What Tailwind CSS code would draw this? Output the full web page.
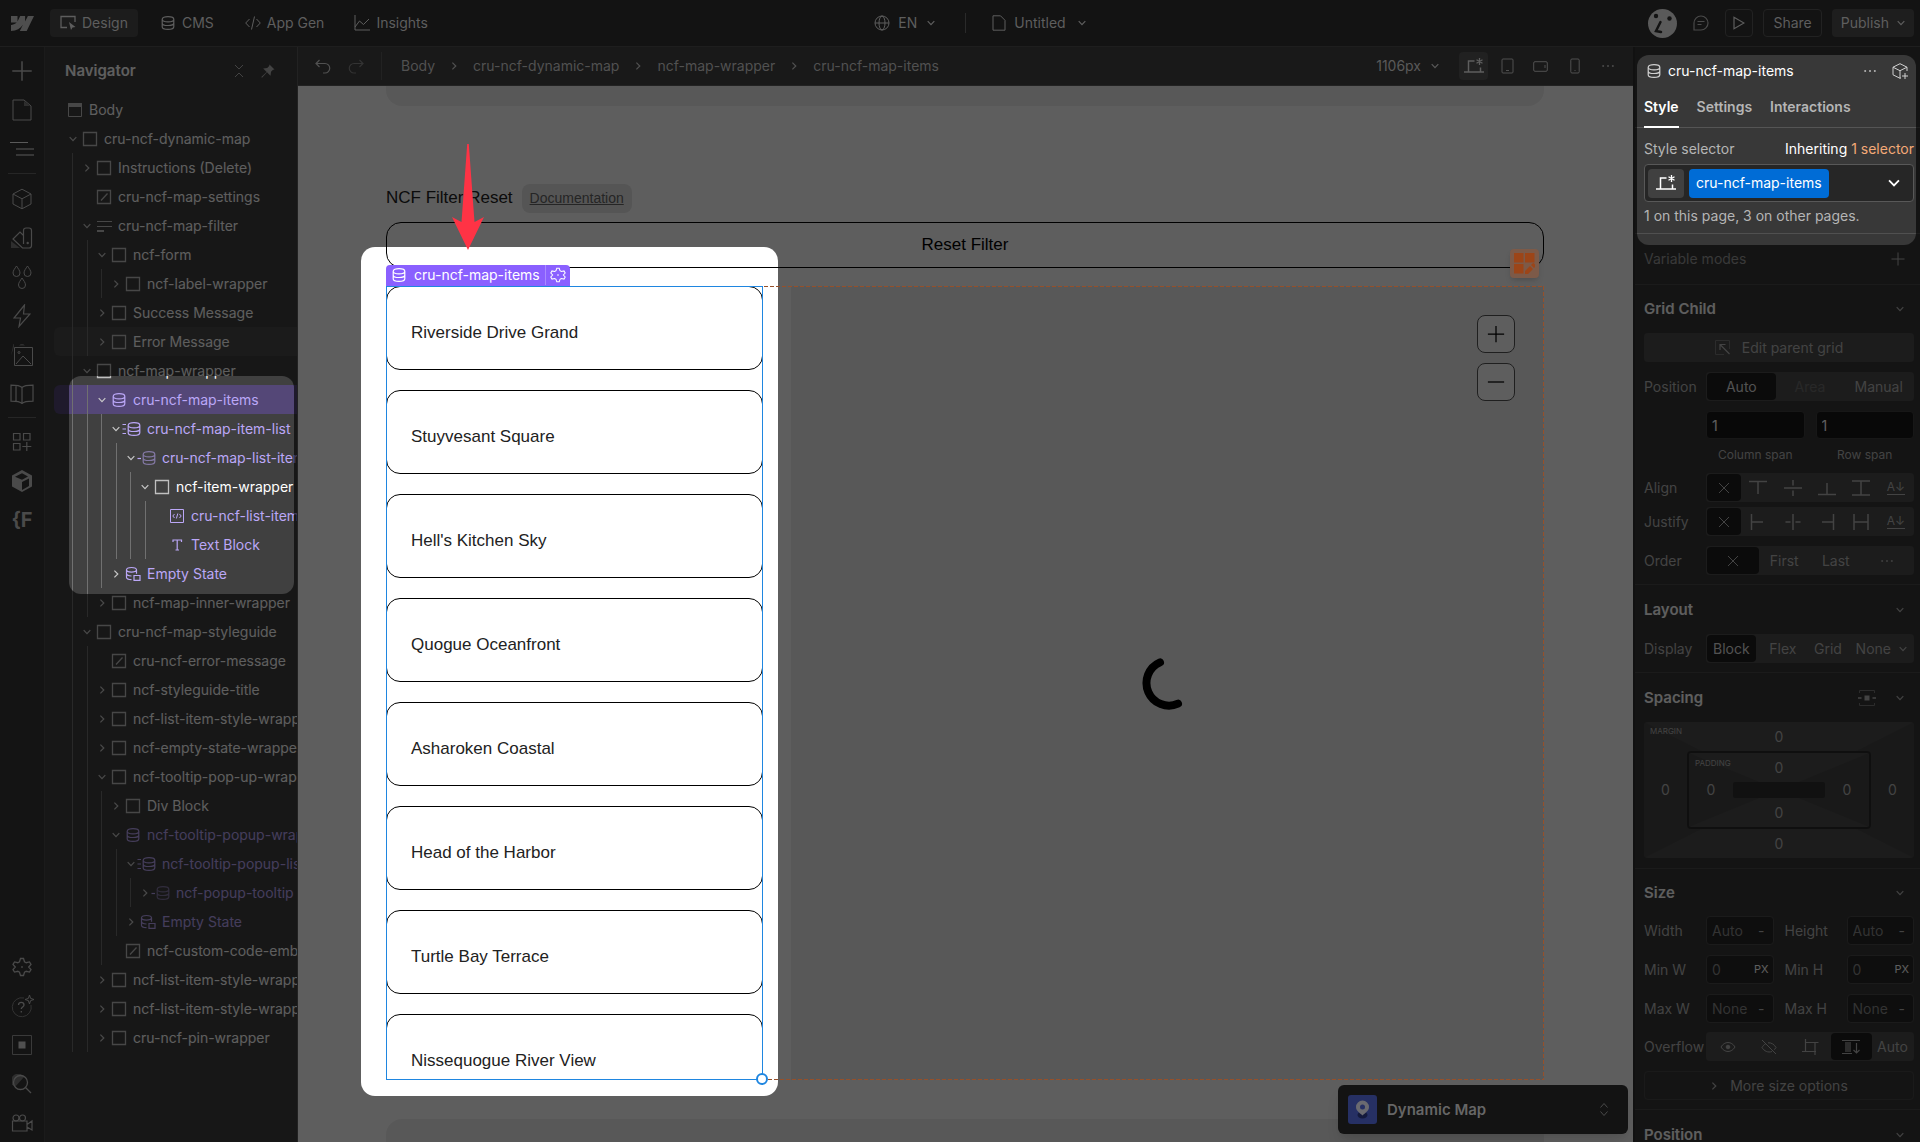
<!DOCTYPE html>
<html lang="en">
<head>
    <meta charset="UTF-8">
    <meta name="viewport" content="width=device-width, initial-scale=1.0">
    <title>Designer - Dynamic Map</title>

    <script src="https://cdn.jsdelivr.net/npm/@tailwindcss/browser@4"></script>

    <script>
        // Navigator tree: [depth, chevron, icon, label, colour]
        const tree = [
            [0, "", "body", "Body", ""],
            [1, "down", "box", "cru-ncf-dynamic-map", ""],
            [2, "right", "box", "Instructions (Delete)", ""],
            [2, "", "slash", "cru-ncf-map-settings", ""],
            [2, "down", "form", "cru-ncf-map-filter", ""],
            [3, "down", "box", "ncf-form", ""],
            [4, "right", "box", "ncf-label-wrapper", ""],
            [3, "right", "box", "Success Message", ""],
            [3, "right", "box", "Error Message", "hover"],
            [2, "down", "box", "ncf-map-wrapper", ""],
            [3, "down", "db", "cru-ncf-map-items", "selected"],
            [4, "down", "dblist", "cru-ncf-map-item-list", "purple"],
            [5, "down", "dbitem", "cru-ncf-map-list-item", "purple"],
            [6, "down", "box", "ncf-item-wrapper", ""],
            [7, "", "embed", "cru-ncf-list-item", "purple"],
            [7, "", "text", "Text Block", "purple"],
            [4, "right", "dbempty", "Empty State", "purple"],
            [3, "right", "box", "ncf-map-inner-wrapper", ""],
            [2, "down", "box", "cru-ncf-map-styleguide", ""],
            [3, "", "slash", "cru-ncf-error-message", ""],
            [3, "right", "box", "ncf-styleguide-title", ""],
            [3, "right", "box", "ncf-list-item-style-wrapper", ""],
            [3, "right", "box", "ncf-empty-state-wrapper", ""],
            [3, "down", "box", "ncf-tooltip-pop-up-wrapper", ""],
            [4, "right", "box", "Div Block", ""],
            [4, "down", "db", "ncf-tooltip-popup-wrapper", "purple"],
            [5, "down", "dblist", "ncf-tooltip-popup-list", "purple"],
            [6, "right", "dbitem", "ncf-popup-tooltip", "purple"],
            [5, "right", "dbempty", "Empty State", "purple"],
            [4, "", "slash", "ncf-custom-code-embed", ""],
            [3, "right", "box", "ncf-list-item-style-wrapper", ""],
            [3, "right", "box", "ncf-list-item-style-wrapper", ""],
            [3, "right", "box", "cru-ncf-pin-wrapper", ""]
        ];
        const step = 14.5;

        document.addEventListener("DOMContentLoaded", function() {
            let html = "";
            for (const [depth, chevron, icon, label, state] of tree) {
                const purple = state === "purple" || state === "selected";
                const bg = state === "selected" ? "bg-[#544777]" : state === "hover" ? "bg-[#494949]" : "";
                let guides = "";
                for (let i = 0; i < depth - 1; i++) {
                    guides += `<span class="absolute inset-y-0 w-px bg-[#707070]" style="left:${Math.round(18 + i * step)}px"></span>`;
                }
                html += `<li class="relative h-[29px] rounded-l-md ${bg}">${guides}
                    <button class="flex h-full items-center whitespace-nowrap ${purple ? "text-[#bba7f7]" : "text-white"}" style="padding-left:${Math.round(depth * step)}px">
                        <svg class="mr-[6px] size-2 ${chevron ? "" : "invisible"} text-[#c8c8c8]"><use href="#${chevron || "down"}"/></svg>
                        <svg class="-ml-[5px] mr-[6px] h-4 w-5 ${purple ? "" : "text-[#c0c0c0]"}"><use href="#n-${icon}"/></svg>
                        <span>${label}</span>
                    </button>
                </li>`;
            }
            document.getElementById("tree").innerHTML = html;
        })
    </script>
</head>
<body class="flex h-screen flex-col overflow-hidden bg-[#131313] fill-none stroke-current font-['Inter',sans-serif] text-sm text-[#5e5e5e]">

    <!-- Shared icons, they take fill and stroke from body -->
    <svg width="0" height="0" class="absolute">
        <symbol id="down" viewBox="0 0 8 8"><path d="M.7 2.2 4 5.6l3.300-3.400" stroke-width="1.200"/></symbol>
        <symbol id="right" viewBox="0 0 8 8"><path d="M2.400.6 5.800 4 2.400 7.400" stroke-width="1.200"/></symbol>
        <symbol id="db" viewBox="0 0 16 16"><path d="M2.200 4.200c0-1.600 2.600-2.600 5.800-2.600s5.800 1 5.800 2.600-2.600 2.600-5.800 2.600-5.800-1-5.800-2.600Zm0 0v7.600c0 1.600 2.600 2.600 5.800 2.600s5.800-1 5.800-2.600V4.200M2.200 7.900c0 1.500 2.600 2.600 5.800 2.600s5.800-1.100 5.800-2.600" stroke-width="1.200"/></symbol>
        <symbol id="n-body" viewBox="-4 0 20 16"><path d="M1.500 1.500h13v13h-13z"/><path d="M1.500 1.500h13v3h-13z" fill="currentColor"/></symbol>
        <symbol id="n-box" viewBox="-4 0 20 16"><path d="M1.500 1.500h13v13h-13z" stroke-width="1.300"/></symbol>
        <symbol id="n-slash" viewBox="-4 0 20 16"><path d="M1.500 1.500h13v13h-13zM5 11.500l6.500-7" stroke-width="1.300"/></symbol>
        <symbol id="n-form" viewBox="-4 0 20 16"><path d="M1 3.500h15M1 8.500h15"/><path d="M1 13h7" stroke-width="2"/></symbol>
        <symbol id="n-db" viewBox="-4 0 20 16"><use href="#db" width="16" height="16"/></symbol>
        <symbol id="n-dblist" viewBox="-4 0 20 16"><path d="M-2.500 3.500H1M-2.500 8H1M-2.500 12.500H1" stroke-width="1.200"/><use href="#db" x="1" width="16" height="16"/></symbol>
        <symbol id="n-dbitem" viewBox="-4 0 20 16"><path d="M-2.500 8.500H1" stroke-width="1.200"/><use href="#db" x="1" width="16" height="16" opacity=".55"/></symbol>
        <symbol id="n-dbempty" viewBox="-4 0 20 16"><path d="M1.500 3.800c0-1.400 2.300-2.300 5-2.300s5 .9 5 2.300-2.300 2.300-5 2.300-5-.9-5-2.300Zm0 0v7.500c0 1.400 2 2.300 5 2.400M1.500 7.600c0 1.400 2 2.300 5 2.400M11.500 3.800v4M9 9.500h6v4.800H9z" stroke-width="1.200"/></symbol>
        <symbol id="n-embed" viewBox="-4 0 20 16"><path d="M1.500 1.500h13v13h-13zM5.500 6 3.800 8l1.700 2M10.500 6l1.700 2-1.700 2M8.800 5.500l-1.400 5"/></symbol>
        <symbol id="n-text" viewBox="-4 0 20 16"><path d="M4 5V3h8.500v2M8.200 3v10M6.500 13h3.500" stroke-width="1.200"/></symbol>
        <symbol id="plus" viewBox="0 0 16 16"><path d="M8 1.500v13M1.500 8h13"/></symbol>
        <symbol id="x" viewBox="0 0 16 16"><path d="m3 3 10 10M13 3 3 13"/></symbol>
        <symbol id="dots" viewBox="0 0 16 16"><path d="M1.500 8h2M7 8h2M12.500 8h2" stroke-width="1.800"/></symbol>
        <symbol id="desktop" viewBox="0 0 20 16"><path d="M4.500 13.500V3h6M0 14h20M16.500 9.500V14" stroke-width="1.500"/><path d="M15.500 0v7M12.500 1.700l6 3.600M18.500 1.700l-6 3.600" stroke-width="1.300"/></symbol>
        <symbol id="file" viewBox="0 0 14 16"><path d="M1 .8h7.500L13 5.300v9.900H1z"/></symbol>
        <symbol id="cube" viewBox="0 0 22 22"><path d="M11 1.200 20 6v10l-9 4.800L2 16V6zM2 6l9 4.800L20 6M11 10.800v10"/></symbol>
        <symbol id="gear" viewBox="0 0 20 20"><path d="M8.500 1.500h3l1 3.200 1.700 1 3.300-.8 1.500 2.600-2.300 2.500 2.300 2.500-1.500 2.600-3.300-.8-1.700 1-1 3.200h-3l-1-3.200-1.700-1-3.300.8L1 12.500 3.300 10 1 7.500l1.500-2.600 3.300.8 1.700-1z" stroke-width="1.300"/><path d="M9.200 9.200h1.600v1.600H9.200z" fill="currentColor" stroke="none"/></symbol>
        <symbol id="a-top" viewBox="0 0 18 16"><path d="M0 1.500h18M9 2v12" stroke-width="1.500"/></symbol>
        <symbol id="a-mid" viewBox="0 0 18 16"><path d="M0 8h18M9 0v5.500M9 10.500V16" stroke-width="1.500"/></symbol>
        <symbol id="a-bottom" viewBox="0 0 18 16"><path d="M0 14.500h18M9 14V3" stroke-width="1.500"/></symbol>
        <symbol id="a-stretch" viewBox="0 0 18 16"><path d="M0 1h18M0 15h18M9 1v14" stroke-width="1.500"/></symbol>
        <symbol id="j-left" viewBox="0 0 18 16"><path d="M2.500-1v18M3 8h11" stroke-width="1.500"/></symbol>
        <symbol id="j-mid" viewBox="0 0 18 16"><path d="M9-1v18M1.500 8h5M11.500 8h5" stroke-width="1.500"/></symbol>
        <symbol id="j-right" viewBox="0 0 18 16"><path d="M15.500-1v18M4 8h11" stroke-width="1.500"/></symbol>
        <symbol id="j-stretch" viewBox="0 0 18 16"><path d="M2-1v18M16-1v18M2 8h14" stroke-width="1.500"/></symbol>
    </svg>

    <!-- Top bar -->
    <header class="grid h-[47px] shrink-0 grid-cols-[1fr_auto_1fr] items-center border-b border-[#1e1e1e] bg-[#131313]">
        <nav class="flex items-center gap-3 pl-[11px]">
            <svg class="mr-1 h-[15px] w-[23px]" viewBox="0 0 23 15" fill="#4e4e4e" stroke="none"><path d="M23 0 15.700 15H8.800l3.100-6.200C9.400 12.500 5.600 14.700 0 15V9.100s3.600-.2 5.700-2.500H0V0h6.500v5.500L9.200 0h4.900v5.400L16.900 0z"/></svg>
            <button class="flex h-7 items-center gap-[6px] rounded bg-[#1c1c1c] px-[10px]">
                <svg class="size-4" viewBox="0 0 16 16" stroke-width="1.300"><path d="M15 7V1.500H1v11h6"/><path d="m9 7 6.500 5-3 .4L11 15z" fill="currentColor" stroke="none"/></svg>
                Design
            </button>
            <button class="flex h-7 items-center gap-[6px] px-[10px]"><svg class="size-4"><use href="#db"/></svg>CMS</button>
            <button class="flex h-7 items-center gap-[6px] px-[9px]">
                <svg class="h-4 w-4" viewBox="0 0 16 16"><path d="M4.500 4 .700 8l3.800 4M11.500 4l3.800 4-3.800 4M9.500 1.500l-3 13"/></svg>
                App Gen
            </button>
            <button class="flex h-7 items-center gap-[6px] px-[9px]">
                <svg class="size-4" viewBox="0 0 16 16"><path d="M1 0v15h15M1 12l4.500-6 4 3.500L15 4"/></svg>
                Insights
            </button>
        </nav>
        <div class="flex items-center pl-10">
            <button class="flex items-center gap-2">
                <svg class="size-4" viewBox="0 0 16 16"><circle cx="8" cy="8" r="7"/><ellipse cx="8" cy="8" rx="3" ry="7"/><path d="M1 8h14"/></svg>
                EN <svg class="ml-[2px] size-2"><use href="#down"/></svg>
            </button>
            <span class="ml-[30px] mr-[26px] h-5 w-px bg-[#2a2a2a]"></span>
            <button class="flex items-center gap-2">
                <svg class="h-4 w-[14px]"><use href="#file"/></svg>
                Untitled <svg class="ml-1 size-2"><use href="#down"/></svg>
            </button>
        </div>
        <div class="flex items-center justify-end gap-[10px] pr-[6px]">
            <svg class="size-[29px]" viewBox="0 0 29 29" stroke="none"><circle cx="14.500" cy="14.500" r="14.500" fill="#5a5a5a"/><circle cx="8" cy="7" r="2.200" fill="#131313"/><circle cx="21.500" cy="9.500" r="2.200" fill="#131313"/><path d="M12.500 13 8 22l5 1" stroke="#131313" stroke-width="2.500" stroke-linecap="round"/></svg>
            <button class="mx-[6px] text-[#4a4a4a]" aria-label="Comments">
                <svg class="size-4" viewBox="0 0 16 16" stroke-width="1.200"><path d="M1 15V8a7 7 0 1 1 7 7zM4.500 6.500h7M4.500 9.500h4"/></svg>
            </button>
            <button class="grid size-7 place-items-center rounded border border-[#222]" aria-label="Preview">
                <svg class="h-[14px] w-3" viewBox="0 0 12 14" stroke-width="1.200"><path d="M1 1.200v11.600L11 7z"/></svg>
            </button>
            <button class="h-7 rounded border border-[#222] px-[9px]">Share</button>
            <button class="flex h-7 items-center gap-2 rounded bg-[#1e1e1e] px-[9px]">Publish <svg class="size-2"><use href="#down"/></svg></button>
        </div>
    </header>

    <div class="flex min-h-0 flex-1">

        <!-- Icon rail -->
        <aside class="flex w-[45px] shrink-0 flex-col items-center border-r border-[#1b1b1b] bg-[#141414] pt-1 text-[#4a4a4a] [&_button]:grid [&_button]:h-[39px] [&_button]:w-full [&_button]:shrink-0 [&_button]:place-items-center">
            <button aria-label="Add"><svg class="size-6"><use href="#plus"/></svg></button>
            <button aria-label="Pages">
                <svg class="h-[22px] w-5" viewBox="0 0 20 22"><path d="M1 1h11l7 6v14H1z"/><path d="M12 2v5h6z" fill="#2e2e2e" stroke="none"/></svg>
            </button>
            <button aria-label="Navigator" class="text-[#5a5a5a]">
                <svg class="h-4 w-6" viewBox="0 0 24 16" stroke-width="1.200"><path d="M0 1.500h18M6 8h18M6 14h18"/></svg>
            </button>
            <span class="my-[5px] h-px w-7 shrink-0 bg-[#262626]"></span>
            <button aria-label="Components"><svg class="size-[22px]"><use href="#cube"/></svg></button>
            <button aria-label="Variables">
                <svg class="size-[22px]" viewBox="0 0 22 22" stroke-width="1.200"><path d="M0 14v7h9z" fill="#2e2e2e" stroke="none"/><path d="M12.500 3.500C12.500 2 13.500 1 15 1h3c1.500 0 2.500 1 2.500 2.500v15c0 1.500-1 2.500-2.500 2.500h-6.500L2 12l7-7 3.500 3.500zM12.500 8v9"/><circle cx="16.700" cy="16" r=".6"/></svg>
            </button>
            <button aria-label="Style guide">
                <svg class="h-6 w-5" viewBox="0 0 20 24"><path id="drop" d="M4.500 1C3 3.500 1 5.500 1 8a3.500 3.500 0 0 0 7 0c0-2.500-2-4.500-3.500-7z"/><use href="#drop" x="11"/><use href="#drop" x="5.500" y="12"/></svg>
            </button>
            <button aria-label="Interactions">
                <svg class="h-6 w-[18px]" viewBox="0 0 18 24" stroke-width="1.200"><path d="M11.500 1 1 14h6.500L6 22.500 17 10h-6.500z"/></svg>
            </button>
            <button aria-label="Assets">
                <svg class="size-[22px]" viewBox="0 0 22 22"><path d="M3.500 3.500h18v18h-18zM5 20l7-8 8 8"/><circle cx="8" cy="8.500" r="1"/><path d="M0 11.500 3-3v6zM11-1l3 2.500H8z" fill="#2e2e2e" stroke="none"/></svg>
            </button>
            <button aria-label="CMS">
                <svg class="h-5 w-6" viewBox="0 0 24 20" stroke-width="1.200"><path d="M12 3.500C10.500 2 8 1.200 1 1.200v16C8 17.200 10.500 18 12 19.500c1.500-1.500 4-2.300 11-2.300v-16c-7 0-9.500.8-11 2.300v16M6 1.500v15.800"/></svg>
            </button>
            <span class="my-1 h-px w-7 shrink-0 bg-[#262626]"></span>
            <button aria-label="Apps">
                <svg class="size-5" viewBox="0 0 20 20" stroke-width="1.200"><path d="M1.500 1.500h6.500v6.500h-6.500zM11.500 1.500H18v6.500h-6.500zM1.500 11.500h6.500V18h-6.500zM14.800 10v9M10.300 14.500h9"/></svg>
            </button>
            <button aria-label="Library app">
                <svg class="size-6" viewBox="0 0 24 24" stroke="none"><path d="m12 1 10 5.500v11L12 23 2 17.500v-11z" fill="#4a4a4a"/><path d="M5 7.700 12 4.200l6 3.200-6 3.400zM12 13v8l7-4V9.500z" fill="#141414"/></svg>
            </button>
            <button aria-label="Finsweet" class="text-xl font-bold">{F</button>
            <span class="flex-1"></span>
            <button aria-label="Settings"><svg class="size-5"><use href="#gear"/></svg></button>
            <button aria-label="Help">
                <svg class="h-6 w-6" viewBox="0 0 24 24"><path d="M14 4a9.500 9.500 0 1 0 7 7" stroke="#333"/><path d="M8.500 11c0-3.500 5.500-3.500 5.500 0 0 2-2.700 2-2.700 4M11.300 17v1.500" stroke-width="1.300"/><path d="M19.500 1l1.100 3.400L24 5.500l-3.400 1.100-1.100 3.400-1.100-3.400L15 5.500l3.400-1.100z"/></svg>
            </button>
            <button aria-label="Audit">
                <svg class="size-5" viewBox="0 0 20 20" stroke="#3a3a3a"><path d="M.5.500h19v19H.5z"/><path d="M6.500 6.500h7v7h-7z" fill="#505050" stroke="none"/></svg>
            </button>
            <button aria-label="Search">
                <svg class="size-5" viewBox="0 0 20 20" stroke-width="1.300"><path d="M3 13 12 3a7 7 0 1 0-9 10z" fill="#2e2e2e" stroke="none"/><circle cx="8.500" cy="8.500" r="7"/><path d="m13.500 13.500 5.500 5.500"/></svg>
            </button>
            <button aria-label="Video tutorials">
                <svg class="h-[18px] w-[22px]" viewBox="0 0 22 18" stroke-width="1.200"><circle cx="5" cy="4" r="3"/><circle cx="11.500" cy="4" r="3"/><path d="M1.500 7v10H16V7zM16 10.500l5-3.500v9l-5-3"/></svg>
            </button>
        </aside>

        <!-- Navigator -->
        <section class="relative w-[253px] shrink-0 overflow-hidden border-r border-[#222] bg-[#404040]">
            <div class="flex h-12 items-center pl-[20px] pr-[22px] text-white">
                <h2 class="flex-1 text-[15px] font-semibold">Navigator</h2>
                <svg class="mr-[18px] h-[14px] w-2 text-[#b5b5b5]" viewBox="0 0 8 14"><path d="m0 1 4 4 4-4M0 13l4-4 4 4"/></svg>
                <svg class="size-[14px]" viewBox="0 0 14 14" fill="#b5b5b5" stroke="none"><path d="m8.500.5 5 5-1.500.3-2 2-.5 4L6 8.300 1 13.700l-.7-.7L5.700 8 2.200 4.500l4-.5 2-2z"/></svg>
            </div>
            <ul id="tree" class="ml-[9px]"><!-- Filled in by JS --></ul>
            <!-- Spotlight -->
            <div class="pointer-events-none absolute left-6 top-[329px] h-[218px] w-[225px] rounded-xl shadow-[0_0_0_2000px_rgba(0,0,0,0.63)]"></div>
        </section>

        <main class="flex min-w-0 flex-1 flex-col">

            <!-- Breadcrumb bar -->
            <div class="flex h-[39px] shrink-0 items-center border-b border-[#222] bg-[#191919] pl-[17px] pr-[18px] text-[#515151]">
                <button aria-label="Undo"><svg class="h-[15px] w-4" viewBox="0 0 16 15" stroke-width="1.200"><path d="M4.500 1 1 4.500 4.500 8M1 4.500h9a4.700 4.700 0 0 1 0 9.500H8"/></svg></button>
                <button class="ml-[17px] text-[#333]" aria-label="Redo"><svg class="h-[15px] w-4" viewBox="0 0 16 15" stroke-width="1.200"><path d="M11.500 1 15 4.500 11.500 8M15 4.500H6A4.700 4.700 0 0 0 6 14h2"/></svg></button>
                <span class="ml-[17px] mr-[19px] h-7 w-px bg-[#222]"></span>
                <nav class="flex flex-1 items-center gap-[15px] whitespace-nowrap">
                    <a href="#">Body</a>
                    <svg class="size-2"><use href="#right"/></svg>
                    <a href="#">cru-ncf-dynamic-map</a>
                    <svg class="size-2"><use href="#right"/></svg>
                    <a href="#">ncf-map-wrapper</a>
                    <svg class="size-2"><use href="#right"/></svg>
                    <a href="#">cru-ncf-map-items</a>
                </nav>
                <button class="flex items-center gap-[10px] text-[#5a5a5a]">1106px <svg class="size-2"><use href="#down"/></svg></button>
                <button class="ml-5 grid h-7 w-[29px] place-items-center rounded bg-[#212121] text-[#5e5e5e]" aria-label="Desktop"><svg class="h-4 w-5"><use href="#desktop"/></svg></button>
                <button class="ml-[13px]" aria-label="Tablet"><svg class="h-4 w-[13px]" viewBox="0 0 13 16"><path d="M2 1h9q1 0 1 1v12q0 1-1 1H2q-1 0-1-1V2q0-1 1-1zM5 12.500h3"/></svg></button>
                <button class="ml-[19px]" aria-label="Mobile landscape"><svg class="h-[11px] w-[15px]" viewBox="0 0 15 11"><path d="M2 .7h11q1.300 0 1.300 1.300v7q0 1.300-1.300 1.300H2Q.700 10.300.700 9V2Q.700.700 2 .700zM12 4v3"/></svg></button>
                <button class="ml-[22px]" aria-label="Mobile"><svg class="h-4 w-[10px]" viewBox="0 0 10 16"><path d="M2 1h6q1.200 0 1.200 1.200v11.600Q9.200 15 8 15H2Q.800 15 .800 13.800V2.200Q.800 1 2 1zM4.500 12.500h1"/></svg></button>
                <button class="ml-[21px]" aria-label="More"><svg class="size-[14px]"><use href="#dots"/></svg></button>
            </div>

            <!-- Canvas -->
            <div class="relative flex min-h-0 flex-1 flex-col overflow-hidden bg-white pl-[88px] pr-[89px] font-['Liberation_Sans',sans-serif] text-[17px] text-[#222]">
                <div class="h-5 shrink-0 rounded-b-2xl bg-[#efefef]"></div>
                <div class="mt-[78px] flex h-[29px] shrink-0 items-center gap-[9px]">
                    <h3>NCF Filter Reset</h3>
                    <a href="#" class="rounded-lg bg-[#e6e6e6] px-2 text-sm/[29px] text-[#666] underline">Documentation</a>
                </div>
                <button class="mt-[9px] h-[46px] shrink-0 rounded-[15px] border border-black text-black">Reset Filter</button>

                <div class="relative mt-[18px] grid h-[794px] shrink-0 grid-cols-[377px_1fr] gap-7">
                    <ul class="flex flex-col gap-5 overflow-hidden leading-6 [&_li]:shrink-0 [&_li]:rounded-[14px] [&_li]:border [&_li]:border-black [&_li]:pb-6 [&_li]:pl-6 [&_li]:pt-[34px]">
                        <li>Riverside Drive Grand</li>
                        <li>Stuyvesant Square</li>
                        <li>Hell's Kitchen Sky</li>
                        <li>Quogue Oceanfront</li>
                        <li>Asharoken Coastal</li>
                        <li>Head of the Harbor</li>
                        <li>Turtle Bay Terrace</li>
                        <li>Nissequogue River View</li>
                    </ul>
                    <div class="relative grid place-items-center bg-[#efefef] text-black">
                        <svg class="size-[52px] overflow-visible" viewBox="1 -1 52 52" stroke-width="8" stroke-linecap="round"><path d="M19 4.400A22.500 22.500 0 1 0 37 45.700"/></svg>
                        <div class="absolute right-[29px] top-[29px] flex flex-col gap-[10px]">
                            <button class="grid size-[38px] place-items-center rounded-lg border border-[#555] bg-white" aria-label="Zoom in"><svg class="size-5"><use href="#plus"/></svg></button>
                            <button class="grid size-[38px] place-items-center rounded-lg border border-[#555] bg-white" aria-label="Zoom out"><svg class="size-5" viewBox="0 0 16 16"><path d="M1.500 8h13"/></svg></button>
                        </div>
                    </div>
                </div>
                <div class="mt-[39px] flex-1 rounded-t-2xl bg-[#efefef]"></div>

                <!-- Spotlight -->
                <div class="pointer-events-none absolute left-[63px] top-[161px] h-[849px] w-[417px] rounded-[14px] shadow-[0_0_0_2000px_rgba(0,0,0,0.63)]"></div>

                <!-- Grid outline and its edit badge -->
                <div class="pointer-events-none absolute left-[88px] right-[89px] top-[200px] h-[794px]">
                    <svg class="size-full"><rect width="100%" height="100%" stroke="#96502a" stroke-width="2" stroke-dasharray="4 2"/></svg>
                </div>
                <button class="absolute right-[94px] top-[163px] grid size-[29px] place-items-center rounded bg-[#7d5a48] shadow-md" aria-label="Edit grid">
                    <svg class="size-[21px]" viewBox="0 0 21 21" fill="#9c4518" stroke="none"><path d="M0 0h9.500v9.500H0zM11 0h9.500v9.500H11zM0 11h9.500v9.500H0z"/><path d="M10 21.500v-4l8-8 4 4-8 8z" fill="#7d5a48"/><path d="M11 21v-3l5-5 3 3-5 5zM17 12l1.500-1.500q.8-.8 1.600 0l1.400 1.400q.8.800 0 1.600L20 15z"/></svg>
                </button>

                <!-- Selected element -->
                <div class="pointer-events-none absolute left-[88px] top-[200px] h-[794px] w-[377px] border border-[#1f86e0]">
                    <span class="absolute -bottom-[6px] -right-[6px] size-3 rounded-full border-2 border-[#1f86e0] bg-white"></span>
                </div>
                <div class="absolute left-[88px] top-[179px] flex h-[21px] rounded-t bg-[#8a60ff] font-['Inter',sans-serif] text-sm/5 text-white">
                    <span class="flex h-5 items-center gap-[7px] border-r border-[#a98aff] px-[5px]"><svg class="size-4"><use href="#db"/></svg>cru-ncf-map-items</span>
                    <button class="h-5 px-1" aria-label="Element settings"><svg class="size-4"><use href="#gear"/></svg></button>
                </div>
                <svg class="pointer-events-none absolute left-[154px] top-[58px] h-[106px] w-8" viewBox="0 0 32 106" fill="#ff3345" stroke="none"><path d="M15.200 0h1.600l5.700 78 9.500-5-16 33L0 73l9.500 5z"/></svg>

                <!-- App switcher -->
                <button class="absolute bottom-2 right-[5px] flex h-[49px] w-[290px] items-center rounded-md bg-[#131313] px-[10px] font-['Inter',sans-serif] text-[15px] font-semibold text-[#666] shadow-lg">
                    <svg class="mr-[10px] size-[29px]" viewBox="0 0 29 29" stroke="none"><rect width="29" height="29" rx="3" fill="#263064"/><ellipse cx="14.500" cy="20" rx="5" ry="3.500" fill="#141a3c"/><path d="M14.500 5.500A6.500 6.500 0 0 0 8 12c0 4 4 6 6.500 8.500C17 18 21 16 21 12a6.500 6.500 0 0 0-6.500-6.500z" fill="#6a6a70"/><circle cx="14.500" cy="12" r="2.500" fill="#263064"/></svg>
                    Dynamic Map
                    <svg class="ml-auto mr-[10px] h-[13px] w-2 text-[#4a4a4a]" viewBox="0 0 8 13"><path d="m.5 4.500 3.500-4 3.500 4M.5 8.500l3.500 4 3.500-4"/></svg>
                </button>
            </div>
        </main>

        <!-- Style panel -->
        <aside class="relative w-[287px] shrink-0 overflow-hidden border-l-2 border-[#111] bg-[#383838] text-[#b5b5b5]">
            <div class="flex h-12 items-center pl-[11px] pr-3 text-white">
                <svg class="mr-[6px] size-4 text-[#d0d0d0]"><use href="#db"/></svg>
                <h2 class="flex-1">cru-ncf-map-items</h2>
                <button class="mr-[15px]" aria-label="More"><svg class="size-[14px] text-[#c8c8c8]"><use href="#dots"/></svg></button>
                <button class="text-[#d0d0d0]" aria-label="Create component"><svg class="size-4" viewBox="0 0 16 16"><path d="M15 8V4.200L8 .700 1 4.200v7.600l7 3.500 1-.5M1 4.200l7 3.500 7-3.500M8 7.700v7.600M13 10v6M10 13h6"/></svg></button>
            </div>
            <div class="flex h-[33px] gap-[18px] border-b border-[#555] pl-[9px] font-semibold">
                <button class="-mb-px border-b-2 border-white pb-2 text-white">Style</button>
                <button class="pb-[9px]">Settings</button>
                <button class="pb-[9px]">Interactions</button>
            </div>

            <div class="border-b border-[#505050] pb-[7px] pl-[9px] pr-[6px]">
                <div class="flex h-9 items-center justify-between pt-[5px]">
                    <span>Style selector</span>
                    <span class="text-white">Inheriting <a href="#" class="text-[#f3a977]">1 selector</a></span>
                </div>
                <div class="flex h-[38px] items-center gap-[5px] rounded border border-[#585858] bg-[#262626] px-[3px]">
                    <button class="grid h-[29px] w-9 place-items-center rounded-sm bg-[#404040] text-white" aria-label="Breakpoint"><svg class="h-4 w-5"><use href="#desktop"/></svg></button>
                    <button class="h-[29px] rounded-sm bg-[#006cd6] px-[7px] text-white">cru-ncf-map-items</button>
                    <button class="ml-auto mr-[10px]" aria-label="Open selectors"><svg class="size-3 text-white"><use href="#down"/></svg></button>
                </div>
                <p class="pt-1 text-sm/5">1 on this page, 3 on other pages.</p>
            </div>

            <div class="flex h-[51px] items-center justify-between border-b border-[#494949] pl-[9px] pr-[14px]">
                <span class="text-[#9a9a9a]">Variable modes</span>
                <button aria-label="Add mode"><svg class="size-4"><use href="#plus"/></svg></button>
            </div>

            <!-- Grid child -->
            <section class="border-b border-[#494949] pb-[9px] pl-[9px] pr-[6px]">
                <div class="flex h-12 items-center justify-between pr-[10px]">
                    <h3 class="text-[15px] font-semibold text-white">Grid Child</h3>
                    <svg class="size-2"><use href="#down"/></svg>
                </div>
                <button class="flex h-[29px] w-full items-center justify-center gap-3 rounded bg-[#4d4d4d]">
                    <svg class="size-[15px]" viewBox="0 0 15 15"><path d="M9 14.500H.500V.500h14V9" stroke="#777"/><path d="M5 10V4.500h5.500M5 4.500l9.500 9.500" stroke-width="1.200"/></svg>
                    Edit parent grid
                </button>
                <div class="mt-[10px] flex items-center">
                    <span class="w-[62px]">Position</span>
                    <div class="grid h-[29px] flex-1 grid-cols-3 rounded bg-[#4d4d4d] p-px">
                        <button class="rounded bg-[#1e1e1e] text-[#ddd]">Auto</button><button class="text-[#6e6e6e]">Area</button><button>Manual</button>
                    </div>
                </div>
                <div class="mt-[10px] grid grid-cols-2 gap-[11px] pl-[62px] text-center text-xs">
                    <div>
                        <input id="col-span" value="1" class="block h-7 w-full rounded border border-[#404040] bg-[#161616] px-[5px] text-sm text-white">
                        <label for="col-span" class="mt-2 block leading-4">Column span</label>
                    </div>
                    <div>
                        <input id="row-span" value="1" class="block h-7 w-full rounded border border-[#404040] bg-[#161616] px-[5px] text-sm text-white">
                        <label for="row-span" class="mt-2 block leading-4">Row span</label>
                    </div>
                </div>
                <div class="mt-[10px] flex items-center">
                    <span class="w-[62px]">Align</span>
                    <div class="grid h-[29px] flex-1 grid-cols-6 rounded bg-[#4d4d4d] p-px [&_button]:grid [&_button]:place-items-center [&_svg]:h-4 [&_svg]:w-[18px]">
                        <button class="rounded bg-[#1e1e1e]" aria-label="None"><svg><use href="#x"/></svg></button>
                        <button aria-label="Start"><svg><use href="#a-top"/></svg></button>
                        <button aria-label="Center"><svg><use href="#a-mid"/></svg></button>
                        <button aria-label="End"><svg><use href="#a-bottom"/></svg></button>
                        <button aria-label="Stretch"><svg><use href="#a-stretch"/></svg></button>
                        <button aria-label="Baseline"><span class="border-b border-current text-xs/[14px]">A↓</span></button>
                    </div>
                </div>
                <div class="mt-[5px] flex items-center">
                    <span class="w-[62px]">Justify</span>
                    <div class="grid h-[29px] flex-1 grid-cols-6 rounded bg-[#4d4d4d] p-px [&_button]:grid [&_button]:place-items-center [&_svg]:h-4 [&_svg]:w-[18px]">
                        <button class="rounded bg-[#1e1e1e]" aria-label="None"><svg><use href="#x"/></svg></button>
                        <button aria-label="Start"><svg><use href="#j-left"/></svg></button>
                        <button aria-label="Center"><svg><use href="#j-mid"/></svg></button>
                        <button aria-label="End"><svg><use href="#j-right"/></svg></button>
                        <button aria-label="Stretch"><svg><use href="#j-stretch"/></svg></button>
                        <button aria-label="Baseline"><span class="border-b border-current text-xs/[14px]">A↓</span></button>
                    </div>
                </div>
                <div class="mt-[10px] flex items-center">
                    <span class="w-[62px]">Order</span>
                    <div class="grid h-[29px] flex-1 grid-cols-4 rounded bg-[#4d4d4d] p-px [&_button]:grid [&_button]:place-items-center">
                        <button class="rounded bg-[#1e1e1e]" aria-label="None"><svg class="size-4"><use href="#x"/></svg></button>
                        <button>First</button><button>Last</button>
                        <button aria-label="More"><svg class="size-[14px]"><use href="#dots"/></svg></button>
                    </div>
                </div>
            </section>

            <!-- Layout -->
            <section class="border-b border-[#494949] pb-[9px] pl-[9px] pr-[6px]">
                <div class="flex h-[49px] items-center justify-between pr-[10px]">
                    <h3 class="text-[15px] font-semibold text-white">Layout</h3>
                    <svg class="size-2"><use href="#down"/></svg>
                </div>
                <div class="flex items-center">
                    <span class="w-[62px]">Display</span>
                    <div class="flex h-[29px] flex-1 justify-between rounded bg-[#4d4d4d] p-px">
                        <button class="rounded bg-[#1e1e1e] px-[6px] text-[#ddd]">Block</button><button class="px-1">Flex</button><button class="px-1">Grid</button>
                        <button class="flex items-center gap-2 pr-[6px]">None <svg class="size-2"><use href="#down"/></svg></button>
                    </div>
                </div>
            </section>

            <!-- Spacing -->
            <section class="border-b border-[#494949] pb-[10px] pl-[9px] pr-[6px]">
                <div class="flex h-[49px] items-center pr-[10px]">
                    <h3 class="flex-1 text-[15px] font-semibold text-white">Spacing</h3>
                    <svg class="mr-5 h-4 w-[18px]" viewBox="0 0 18 16"><path d="M1.500 3V.500h15V3M1.500 13v2.500h15V13" stroke="#777"/><path d="M0 8h3.500M14.500 8H18" stroke-width="1.300"/><path d="M6.500 5.500h5v5h-5z" fill="currentColor" stroke="none"/></svg>
                    <svg class="size-2"><use href="#down"/></svg>
                </div>
                <div class="relative grid h-[136px] grid-cols-[43px_1fr_43px] grid-rows-[29px_1fr_29px] place-items-center overflow-hidden rounded bg-[#4d4d4d]">
                    <svg class="absolute inset-0 size-full" viewBox="0 0 270 136" preserveAspectRatio="none" fill="#464646" stroke="none"><path d="M0 0 135 68 0 136zM270 0 135 68l135 68z"/></svg>
                    <span class="absolute left-[6px] top-1 text-[8px]/[10px]">MARGIN</span>
                    <button class="relative col-start-2 row-start-1">0</button>
                    <button class="relative col-start-1 row-start-2">0</button>
                    <div class="relative col-start-2 row-start-2 grid size-full grid-cols-[44px_1fr_44px] grid-rows-[1fr_16px_1fr] place-items-center overflow-hidden rounded border-2 border-[#2b2b2b] bg-[#4d4d4d]">
                        <svg class="absolute inset-0 size-full" viewBox="0 0 184 78" preserveAspectRatio="none" fill="#464646" stroke="none"><path d="M0 0 92 39 0 78zM184 0 92 39l92 39z"/></svg>
                        <span class="absolute left-[6px] top-[5px] text-[8px]/[10px]">PADDING</span>
                        <button class="relative col-start-2 row-start-1">0</button>
                        <button class="relative col-start-1 row-start-2">0</button>
                        <span class="relative col-start-2 row-start-2 size-full rounded-xs bg-[#2f2f2f]"></span>
                        <button class="relative col-start-3 row-start-2">0</button>
                        <button class="relative col-start-2 row-start-3">0</button>
                    </div>
                    <button class="relative col-start-3 row-start-2">0</button>
                    <button class="relative col-start-2 row-start-3">0</button>
                </div>
            </section>

            <!-- Size -->
            <section class="border-b border-[#494949] pb-[9px] pl-[9px] pr-[6px]">
                <div class="flex h-[47px] items-center justify-between pr-[10px]">
                    <h3 class="text-[15px] font-semibold text-white">Size</h3>
                    <svg class="size-2"><use href="#down"/></svg>
                </div>
                <div class="grid grid-cols-[62px_1fr_73px_1fr] items-center gap-y-[10px] [&_div]:flex [&_div]:h-[29px] [&_div]:items-center [&_div]:rounded [&_div]:border [&_div]:border-[#4a4a4a] [&_div]:bg-[#262626] [&_div]:pl-[5px] [&_div]:pr-1 [&_input]:w-0 [&_input]:flex-1 [&_input]:text-[#8a8a8a] [&_label:nth-of-type(even)]:pl-[11px]">
                    <label for="w">Width</label><div><input id="w" value="Auto"><button class="px-1">-</button></div>
                    <label for="h">Height</label><div><input id="h" value="Auto"><button class="px-1">-</button></div>
                    <label for="minw">Min W</label><div><input id="minw" value="0"><button class="text-[11px] text-white">PX</button></div>
                    <label for="minh">Min H</label><div><input id="minh" value="0"><button class="text-[11px] text-white">PX</button></div>
                    <label for="maxw">Max W</label><div><input id="maxw" value="None"><button class="px-1">-</button></div>
                    <label for="maxh">Max H</label><div><input id="maxh" value="None"><button class="px-1">-</button></div>
                </div>
                <div class="mt-[9px] flex items-center">
                    <span class="w-[62px]">Overflow</span>
                    <div class="grid h-[29px] flex-1 grid-cols-5 rounded bg-[#4d4d4d] p-px [&_button]:grid [&_button]:place-items-center [&_svg]:h-4 [&_svg]:w-[18px]">
                        <button aria-label="Visible"><svg viewBox="0 0 18 16"><path d="M2 8c3.500-6 10.500-6 14 0-3.500 6-10.500 6-14 0z"/><circle cx="9" cy="8" r="1.800" fill="currentColor"/></svg></button>
                        <button aria-label="Hidden"><svg viewBox="0 0 18 16"><path d="M2 1l14 14M6 4.500C4 5.500 3 7 2 8.500 4 12 8 14 12 12.500M8 3.800c3.500-.3 6.300 1.700 8 4.700l-1.700 2.200"/></svg></button>
                        <button aria-label="Clip"><svg viewBox="0 0 18 16"><path d="M4.500 0v12.500H15M1 12.500h3.500M14 16V3.500H4.500M17.500 3.500H14" stroke-width="1.200"/></svg></button>
                        <button class="rounded bg-[#1e1e1e]" aria-label="Scroll"><svg viewBox="0 0 18 16"><path d="M0 1.500h18M0 14.500h10M14.500 4v10M11.500 11l3 3 3-3" stroke-width="1.200"/><path d="M3 3h6v10H3z" fill="#777" stroke="none"/></svg></button>
                        <button>Auto</button>
                    </div>
                </div>
                <button class="mt-[10px] flex h-[29px] w-full items-center justify-center gap-3 rounded border border-[#484848]">
                    <svg class="size-2"><use href="#right"/></svg>
                    More size options
                </button>
            </section>

            <section class="flex h-[50px] items-center justify-between pl-[9px] pr-4">
                <h3 class="text-[15px] font-semibold text-white">Position</h3>
                <svg class="size-2"><use href="#down"/></svg>
            </section>

            <!-- Spotlight -->
            <div class="pointer-events-none absolute left-[2px] right-1 top-2 h-[190px] rounded-xl shadow-[0_0_0_2000px_rgba(0,0,0,0.63)]"></div>
        </aside>
    </div>
</body>
</html>
